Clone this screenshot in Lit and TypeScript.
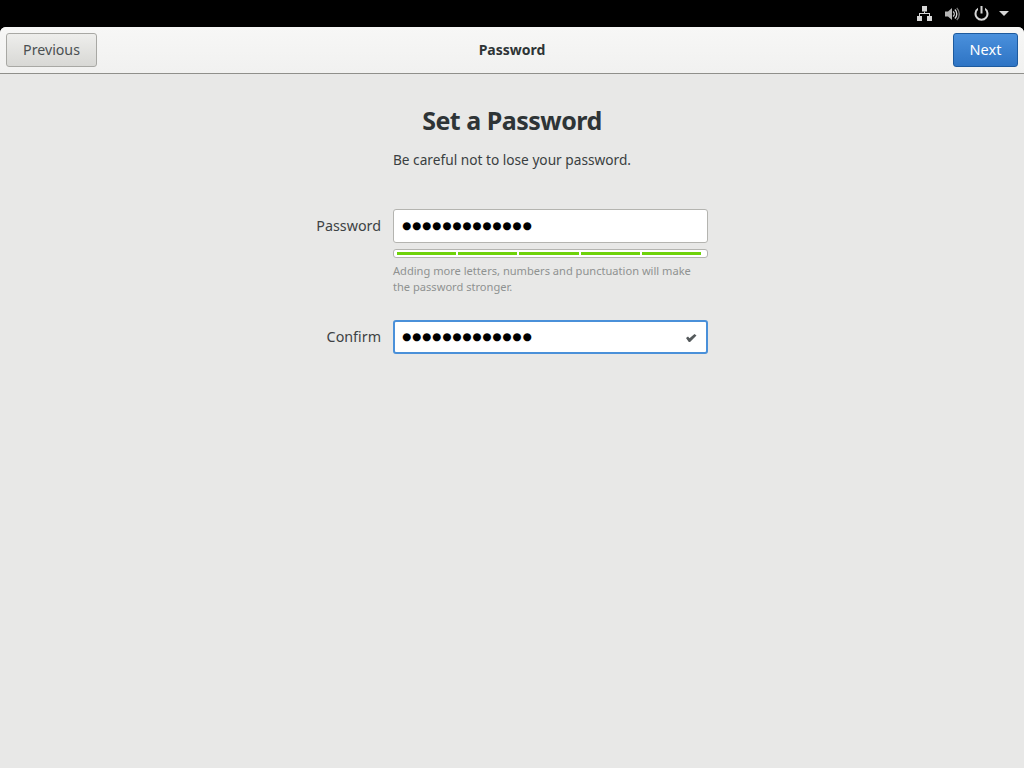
import { LitElement, html, css } from 'lit';
import { customElement } from 'lit/decorators.js';

const DOTS = '●'.repeat(13);

@customElement('app-root')
export class AppRoot extends LitElement {
  static styles = css`
    :host {
      display: flex;
      flex-direction: column;
      width: 1024px;
      height: 768px;
      overflow: hidden;
      background: #000;
      font-family: 'Noto Sans', sans-serif;
      font-size: 14.5px;
      color: #2e3436;
    }
    .panel {
      height: 27px;
      flex: none;
      display: flex;
      align-items: center;
      justify-content: flex-end;
      padding-right: 15px;
      box-sizing: border-box;
    }
    .panel svg {
      display: block;
      fill: #d6d6d6;
    }
    .net {
      margin-right: 13px;
    }
    .vol {
      margin-right: 14px;
    }
    .pow {
      margin-right: 10px;
    }
    .window {
      flex: 1;
      display: flex;
      flex-direction: column;
      background: #e8e8e7;
      border-radius: 6px 6px 0 0;
      overflow: hidden;
    }
    .header {
      height: 47px;
      flex: none;
      box-sizing: border-box;
      border-bottom: 1px solid #8f8f8b;
      background: linear-gradient(#f7f7f6, #f1f1f0);
      padding: 6px;
      display: flex;
      align-items: flex-start;
      justify-content: space-between;
      position: relative;
    }
    .header .title {
      position: absolute;
      left: 0;
      right: 0;
      top: 13px;
      text-align: center;
      font-weight: 700;
      font-size: 14px;
      line-height: 20px;
    }
    .btn {
      height: 34px;
      box-sizing: border-box;
      border-radius: 3px;
      display: flex;
      align-items: center;
      justify-content: center;
      padding-bottom: 2px;
    }
    .prev {
      width: 91px;
      border: 1px solid #a8a8a4;
      background: linear-gradient(#eeeeec, #d8d8d5);
      color: #4b5052;
      font-size: 14.2px;
    }
    .next {
      width: 65px;
      border: 1px solid #1d5a9e;
      background: linear-gradient(#4a90dc, #2e74c4);
      color: #fff;
      font-size: 14.5px;
    }
    .body {
      flex: 1;
      display: flex;
      flex-direction: column;
      align-items: center;
    }
    h1 {
      margin: 27px 0 0;
      font-size: 25px;
      letter-spacing: -0.5px;
      line-height: 38px;
      font-weight: 700;
      color: #2e3436;
    }
    .sub {
      margin: 11px 0 0;
      line-height: 20px;
      font-size: 13.7px;
      color: #3a3f41;
    }
    .form {
      margin: 39px 0 0 200px;
      align-self: flex-start;
      display: grid;
      grid-template-columns: 181px 315px;
      column-gap: 12px;
    }
    .label {
      height: 34px;
      line-height: 33px;
      text-align: right;
      color: #3d4244;
      font-size: 14.3px;
    }
    .entry {
      position: relative;
      height: 34px;
      box-sizing: border-box;
      background: #fff;
      border: 1px solid #b4b4b0;
      border-radius: 3px;
      padding: 0 0 2px 8px;
      display: flex;
      align-items: center;
    }
    .entry.focus {
      border: 2px solid #4a90d9;
      padding-left: 7px;
    }
    .dots {
      font-family: 'DejaVu Sans', sans-serif;
      font-size: 10.5px;
      letter-spacing: 0.87px;
      line-height: 20px;
      color: #000;
    }
    .check {
      position: absolute;
      right: 9px;
      top: 9px;
      fill: #555a5c;
    }
    .bar {
      margin-top: 6px;
      height: 9px;
      box-sizing: border-box;
      background: #fff;
      border: 1px solid #b4b4b0;
      border-radius: 3px;
      padding: 2px 6px 2px 3px;
      display: flex;
      gap: 2px;
    }
    .bar i {
      flex: 1;
      background: #6fd20a;
    }
    .hint {
      margin: 5px 0 26px;
      font-size: 11.1px;
      line-height: 15.5px;
      color: #8f9291;
    }
  `;

  render() {
    return html`
      <div class="panel">
        <svg class="net" width="15" height="15" viewBox="0 0 15 15">
          <rect x="5" y="0" width="5" height="5.500" />
          <rect x="0" y="10" width="5" height="5" />
          <rect x="10" y="10" width="5" height="5" />
          <path d="M7 5.500h1V7h5v3h-1V8H3v2H2V7h5z" />
        </svg>
        <svg class="vol" width="15" height="16" viewBox="0 0 15 16">
          <path d="M0 5.500h3L7 2v12l-4-3.500H0z" opacity=".85" />
          <path d="M8.500 5a4 4 0 0 1 0 6l-.8-1a2.700 2.700 0 0 0 0-4z" />
          <path d="M10.300 3a6.800 6.800 0 0 1 0 10l-.9-1a5.500 5.500 0 0 0 0-8z" />
          <path d="M12.200 1.500a9 9 0 0 1 0 13l-.9-1a7.700 7.700 0 0 0 0-11z" opacity=".55" />
        </svg>
        <svg class="pow" width="15" height="15" viewBox="0 0 15 15">
          <path d="M6.500 0h2v7.500h-2z" />
          <path d="M4 1.800v2.300a5 5 0 1 0 7 0V1.800a7 7 0 1 1-7 0z" />
        </svg>
        <svg width="10" height="5" viewBox="0 0 10 5">
          <path d="M0 0h10L5 5z" />
        </svg>
      </div>
      <div class="window">
        <div class="header">
          <div class="btn prev">Previous</div>
          <div class="title">Password</div>
          <div class="btn next">Next</div>
        </div>
        <div class="body">
          <h1>Set a Password</h1>
          <p class="sub">Be careful not to lose your password.</p>
          <div class="form">
            <div class="label">Password</div>
            <div class="entry"><span class="dots">${DOTS}</span></div>
            <div></div>
            <div class="bar"><i></i><i></i><i></i><i></i><i></i></div>
            <div></div>
            <p class="hint">Adding more letters, numbers and punctuation will make the password stronger.</p>
            <div class="label">Confirm</div>
            <div class="entry focus">
              <span class="dots">${DOTS}</span>
              <svg class="check" width="12" height="12" viewBox="0 0 12 12">
                <path d="M1 7l2-1.500L4.500 7.300 9.500 3 11.500 4.500 5 11H3.800z" />
              </svg>
            </div>
          </div>
        </div>
      </div>
    `;
  }
}
